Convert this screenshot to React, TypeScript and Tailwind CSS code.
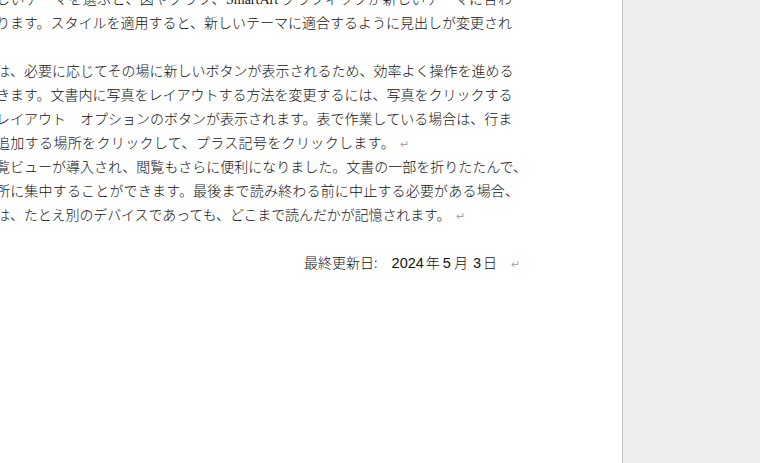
import React from "react";

const jp = "font-['Noto_Sans_CJK_JP',sans-serif]";

function Ret() {
  return (
    <span className="ml-[5px] text-[11px] leading-[0] text-[#a8a8a8] font-['DejaVu_Sans',sans-serif]">
      ↵
    </span>
  );
}

function JLine({ children, wide }: { children: React.ReactNode; wide?: boolean }) {
  return (
    <div
      className={
        (wide ? "w-[523px] " : "w-[516px] ") +
        "h-[24px] whitespace-nowrap text-justify [text-align-last:justify]"
      }
    >
      {children}
    </div>
  );
}

export default function App() {
  return (
    <div className={"flex h-[463px] w-[760px] overflow-hidden bg-white " + jp}>
      <div className="w-[622px] shrink-0 overflow-hidden bg-white">
        <div className="ml-[-4px] mt-[-14px] text-[14px] leading-[24px] text-[#111] font-light [text-spacing-trim:space-all]">
          <JLine>
            しいテーマを選ぶと、図やグラフ、
            <span className="font-['Liberation_Serif',serif] font-normal">SmartArt</span>{" "}
            グラフィックが新しいテーマに合わ
          </JLine>
          <JLine>ります。スタイルを適用すると、新しいテーマに適合するように見出しが変更され</JLine>
          <div className="h-[24px]" />
          <JLine>は、必要に応じてその場に新しいボタンが表示されるため、効率よく操作を進める</JLine>
          <JLine>きます。文書内に写真をレイアウトする方法を変更するには、写真をクリックする</JLine>
          <JLine>レイアウト　オプションのボタンが表示されます。表で作業している場合は、行ま</JLine>
          <div className="h-[24px] whitespace-nowrap tracking-[0.35px]">
            追加する場所をクリックして、プラス記号をクリックします。
            <Ret />
          </div>
          <JLine wide>覧ビューが導入され、閲覧もさらに便利になりました。文書の一部を折りたたんで、</JLine>
          <JLine wide>所に集中することができます。最後まで読み終わる前に中止する必要がある場合、</JLine>
          <div className="h-[24px] whitespace-nowrap tracking-[-0.1px]">
            は、たとえ別のデバイスであっても、どこまで読んだかが記憶されます。
            <Ret />
          </div>
          <div className="h-[24px]" />
          <div className="flex h-[24px] w-[524px] items-baseline justify-end whitespace-nowrap">
            <span>最終更新日:</span>
            <span className="ml-[14px] text-[14.5px] font-['Liberation_Sans',sans-serif] font-normal">2024</span>
            <span className="ml-[2px]">年</span>
            <span className="ml-[3px] text-[14.5px] font-['Liberation_Sans',sans-serif] font-normal">5</span>
            <span className="ml-[3px]">月</span>
            <span className="ml-[5px] text-[14.5px] font-['Liberation_Sans',sans-serif] font-normal">3</span>
            <span className="ml-[2px]">日</span>
            <span className="ml-[9px]">
              <Ret />
            </span>
          </div>
        </div>
      </div>
      <div className="w-px shrink-0 bg-[#c2c2c2]" />
      <div className="flex-1 bg-[#eeeeee]" />
    </div>
  );
}
